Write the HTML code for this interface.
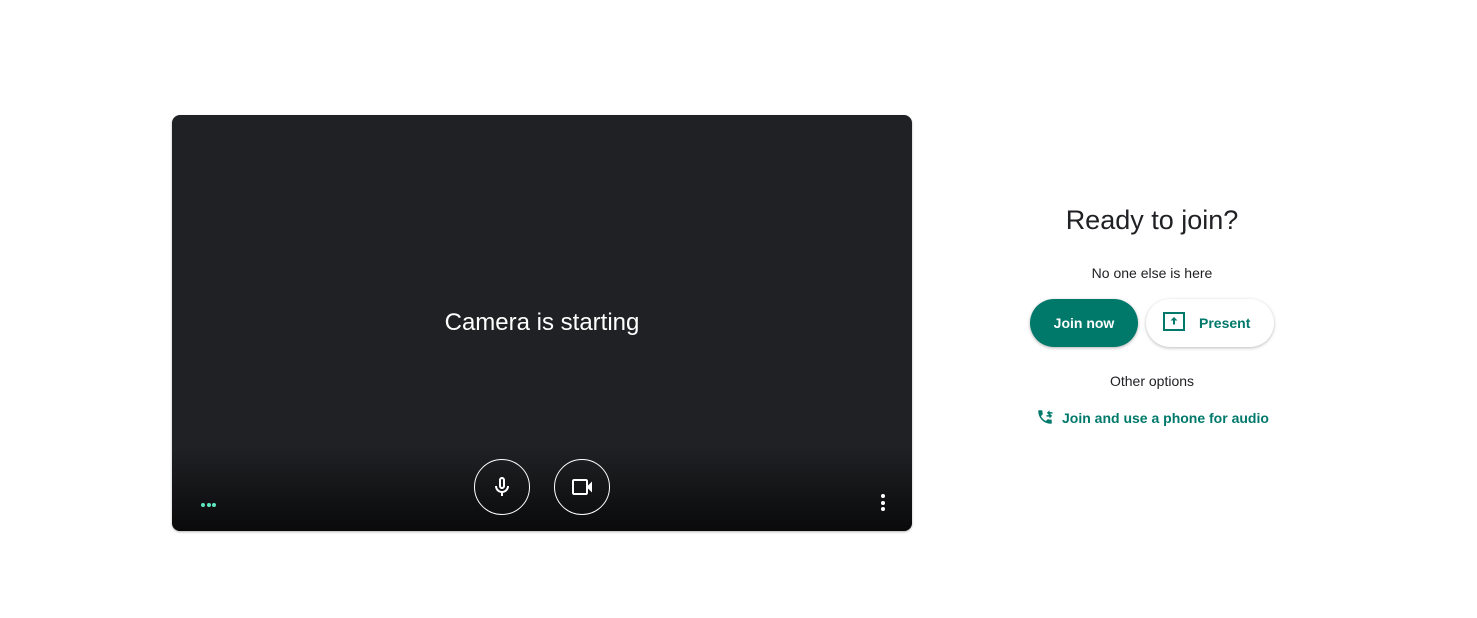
<!DOCTYPE html>
<html><head><meta charset="utf-8"><style>
body{margin:0;width:1477px;height:618px;background:#fff;font-family:"Liberation Sans",sans-serif;position:relative;overflow:hidden}
.vid{position:absolute;left:172px;top:115px;width:740px;height:416px;background:#202124;border-radius:8px;overflow:hidden;box-shadow:0 1px 2px rgba(0,0,0,.3)}
.grad{position:absolute;left:0;right:0;bottom:0;height:85px;background:linear-gradient(rgba(0,0,0,0),rgba(0,0,0,.7))}
.cam{position:absolute;left:0;right:0;top:194px;text-align:center;color:#fff;font-size:24px}
.btn{position:absolute;top:344px;width:56px;height:56px;border:1px solid #fff;border-radius:50%;box-sizing:border-box}
.btn svg{position:absolute;left:15px;top:15px}
.dots{position:absolute;left:29px;top:388px;font-size:0;line-height:0}
.dots i{display:inline-block;width:4px;height:4px;border-radius:50%;background:#5de6c0;margin-right:1.5px}
.more{position:absolute;left:709px;top:379px}
.more i{display:block;width:4px;height:4px;border-radius:50%;background:#fff;margin-bottom:2.5px}
.r{position:absolute;left:1000px;width:304px;text-align:center}
.h{top:205px;font-size:27px;color:#202124}
.s{font-size:14px;color:#202124}
.join{position:absolute;left:1030px;top:299px;width:108px;height:48px;border-radius:24px;background:#00796b;color:#fff;font-size:14px;font-weight:bold;line-height:48px;text-align:center;box-shadow:0 1px 3px rgba(0,0,0,.3)}
.pres{position:absolute;left:1146px;top:299px;width:128px;height:48px;border-radius:24px;background:#fff;color:#00796b;font-size:14px;font-weight:bold;line-height:48px;box-shadow:0 1px 3px rgba(60,64,67,.35);box-sizing:border-box}
.link{position:absolute;left:1036px;top:408px;color:#00796b;font-size:14px;font-weight:bold}
</style></head><body>
<div class="vid">
<div class="grad"></div>
<div class="cam">Camera is starting</div>
<div class="btn" style="left:302px"><svg width="24" height="24" viewBox="0 0 24 24"><path d="M12 14c1.66 0 3-1.34 3-3V5c0-1.66-1.34-3-3-3S9 3.34 9 5v6c0 1.66 1.34 3 3 3zm-1-9c0-.55.45-1 1-1s1 .45 1 1v6c0 .55-.45 1-1 1s-1-.45-1-1V5zm6 6c0 2.76-2.24 5-5 5s-5-2.240-5-5H5c0 3.53 2.61 6.43 6 6.92V21h2v-3.08c3.39-.49 6-3.39 6-6.92h-2z" fill="#fff"/></svg></div>
<div class="btn" style="left:382px"><svg width="24" height="24" viewBox="0 0 24 24"><path d="M18 10.48V6c0-1.1-.9-2-2-2H4c-1.1 0-2 .9-2 2v12c0 1.1.9 2 2 2h12c1.1 0 2-.9 2-2v-4.48l4 3.98v-11l-4 3.98zM16 18H4V6h12v12z" fill="#fff"/></svg></div>
<div class="dots"><i></i><i></i><i></i></div>
<div class="more"><i></i><i></i><i></i></div>
</div>
<div class="r h">Ready to join?</div>
<div class="r s" style="top:265px">No one else is here</div>
<div class="join">Join now</div>
<div class="pres"><svg style="position:absolute;left:17px;top:13px" width="22" height="20" viewBox="0 0 22 20"><rect x="1" y="1" width="20" height="17" fill="none" stroke="#00796b" stroke-width="2"/><path d="M11 5l-3.5 3.5h2.5v4h2v-4h2.5z" fill="#00796b"/></svg><span style="position:absolute;left:53px">Present</span></div>
<div class="r s" style="top:373px">Other options</div>
<div class="link"><svg style="vertical-align:-3px;margin-right:8px" width="18" height="18" viewBox="0 0 24 24"><path d="M20 15.5c-1.25 0-2.45-.2-3.57-.57a1 1 0 0 0-1.020.24l-2.2 2.2a15.05 15.05 0 0 1-6.59-6.59l2.2-2.21a.96.96 0 0 0 .25-1A11.4 11.4 0 0 1 8.5 4c0-.55-.45-1-1-1H4c-.55 0-1 .45-1 1 0 9.39 7.61 17 17 17 .55 0 1-.45 1-1v-3.5c0-.55-.45-1-1-1zM18 5.5V3l-3.5 3.5L18 10V7.5h4V5.5h-4zm-4 6h4v2.5l3.5-3.5L18 7v2.5h-4z" fill="#00796b"/></svg>Join and use a phone for audio</div>
</body></html>
